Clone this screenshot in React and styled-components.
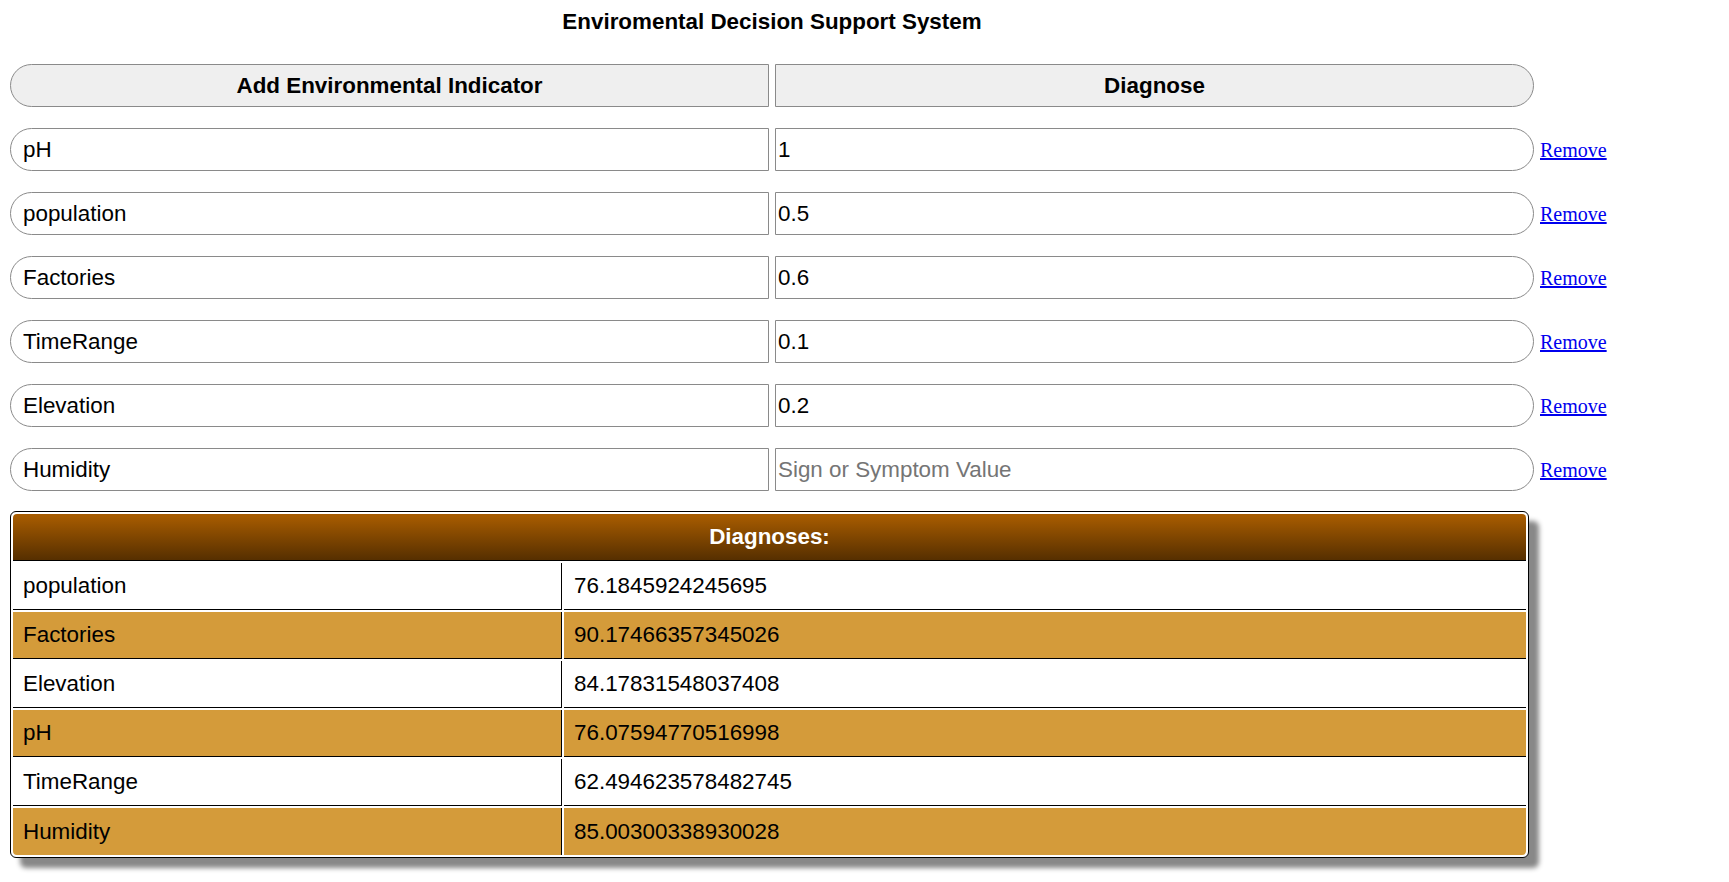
import React from "react";
import styled, { createGlobalStyle } from "styled-components";

const GlobalStyle = createGlobalStyle`
  html, body {
    margin: 0;
    padding: 0;
    background: #ffffff;
  }
  body {
    font-family: "Liberation Sans", Arial, sans-serif;
    color: #000;
  }
`;

const Page = styled.div`
  padding: 9px 0 40px 10px;
  width: 1524px;
`;

const Title = styled.h1`
  margin: 0;
  text-align: center;
  font-size: 22.4px;
  line-height: 25px;
  font-weight: bold;
`;

const FormGrid = styled.div`
  display: grid;
  grid-template-columns: 759px 759px max-content;
  grid-auto-rows: 43px;
  column-gap: 6px;
  row-gap: 21px;
  margin-top: 30px;
  align-items: center;
`;

const ActionButton = styled.button`
  height: 43px;
  box-sizing: border-box;
  border: 1px solid #8a8a8a;
  background: #efefef;
  font-family: "Liberation Sans", Arial, sans-serif;
  font-size: 22.4px;
  font-weight: bold;
  color: #000;
  border-radius: ${(p) => (p.$side === "left" ? "22px 0 0 22px" : "0 22px 22px 0")};
  padding: 0;
  cursor: pointer;
`;

const Field = styled.input`
  height: 43px;
  width: 100%;
  box-sizing: border-box;
  border: 1px solid #8a8a8a;
  background: #fff;
  font-family: "Liberation Sans", Arial, sans-serif;
  font-size: 22.4px;
  color: #000;
  outline: none;
  margin: 0;
  border-radius: ${(p) => (p.$side === "left" ? "22px 0 0 22px" : "0 22px 22px 0")};
  padding: ${(p) => (p.$side === "left" ? "1px 0 0 12px" : "1px 0 0 2px")};
  &::placeholder {
    color: #757575;
  }
`;

const RemoveLink = styled.a`
  font-family: "Liberation Serif", "Times New Roman", serif;
  font-size: 20px;
  color: #0000ee;
  text-decoration: underline;
  cursor: pointer;
  white-space: nowrap;
  padding-top: 2px;
`;

const ResultsTable = styled.div`
  margin-top: 20px;
  width: 1519px;
  box-sizing: border-box;
  border: 1px solid #000;
  border-radius: 6px;
  padding: 2px;
  display: grid;
  grid-template-columns: 549px 1fr;
  gap: 2px;
  background: #fff;
  box-shadow: 10px 10px 5px #888888;
`;

const HeaderCell = styled.div`
  grid-column: 1 / span 2;
  height: 47px;
  box-sizing: border-box;
  border-bottom: 1px solid #000;
  border-radius: 4px 4px 0 0;
  background: linear-gradient(to bottom, #a65b00 5%, #562f00 100%);
  color: #fff;
  font-size: 22.4px;
  font-weight: bold;
  display: flex;
  align-items: center;
  justify-content: center;
`;

const Cell = styled.div`
  height: 47px;
  box-sizing: border-box;
  padding: 0 10px;
  display: flex;
  align-items: center;
  font-size: 22.4px;
  color: #000;
  background: ${(p) => (p.$alt ? "#d49b3a" : "#ffffff")};
  border-bottom: ${(p) => (p.$last ? "none" : "1px solid #000")};
  border-right: ${(p) => (p.$first ? "1px solid #000" : "none")};
  border-radius: ${(p) =>
    p.$last ? (p.$first ? "0 0 0 4px" : "0 0 4px 0") : "0"};
`;

const indicators = [
  { name: "pH", value: "1" },
  { name: "population", value: "0.5" },
  { name: "Factories", value: "0.6" },
  { name: "TimeRange", value: "0.1" },
  { name: "Elevation", value: "0.2" },
  { name: "Humidity", value: "" },
];

const diagnoses = [
  ["population", "76.1845924245695"],
  ["Factories", "90.17466357345026"],
  ["Elevation", "84.17831548037408"],
  ["pH", "76.07594770516998"],
  ["TimeRange", "62.494623578482745"],
  ["Humidity", "85.00300338930028"],
];

export default function App() {
  return (
    <>
      <GlobalStyle />
      <Page>
        <Title>Enviromental Decision Support System</Title>
        <FormGrid>
          <ActionButton $side="left">Add Environmental Indicator</ActionButton>
          <ActionButton $side="right">Diagnose</ActionButton>
          <span />
          {indicators.map((ind) => (
            <React.Fragment key={ind.name}>
              <Field $side="left" defaultValue={ind.name} placeholder="Sign or Symptom" />
              <Field
                $side="right"
                defaultValue={ind.value}
                placeholder="Sign or Symptom Value"
              />
              <RemoveLink href="#">Remove</RemoveLink>
            </React.Fragment>
          ))}
        </FormGrid>
        <ResultsTable>
          <HeaderCell>Diagnoses:</HeaderCell>
          {diagnoses.map(([name, val], i) => {
            const last = i === diagnoses.length - 1;
            const alt = i % 2 === 1;
            return (
              <React.Fragment key={name}>
                <Cell $first $alt={alt} $last={last}>
                  {name}
                </Cell>
                <Cell $alt={alt} $last={last}>
                  {val}
                </Cell>
              </React.Fragment>
            );
          })}
        </ResultsTable>
      </Page>
    </>
  );
}
